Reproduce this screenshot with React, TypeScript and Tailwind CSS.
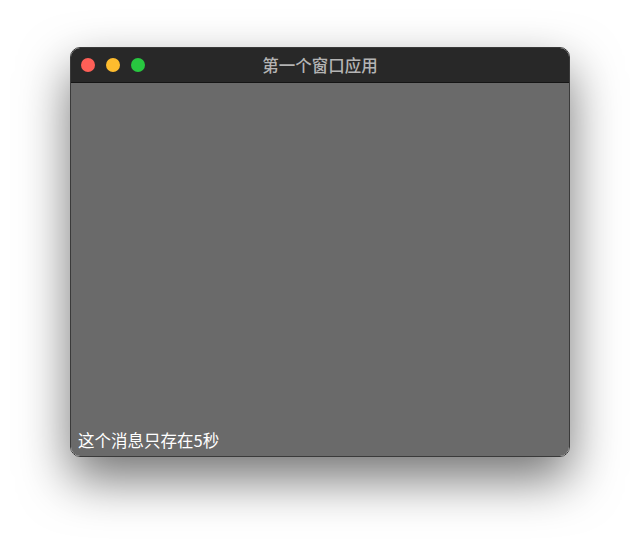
export default function App() {
  return (
    <div
      className="w-[640px] h-[550px] bg-white flex flex-col items-center pt-[47px]"
      style={{ fontFamily: '"Noto Sans CJK SC", "Liberation Sans", sans-serif' }}
    >
      {/* Window */}
      <div className="w-[500px] h-[410px] rounded-[10px] border border-[#3a3a3a] overflow-hidden flex flex-col shadow-[0_22px_50px_rgba(0,0,0,0.55)]">
        {/* Title bar */}
        <div className="relative h-[35px] bg-[#282828] border-b border-[#151515] flex items-center shrink-0">
          <div className="flex items-center gap-[11px] pl-[10px]">
            <span className="w-[14px] h-[14px] rounded-full bg-[#fe5f57]" />
            <span className="w-[14px] h-[14px] rounded-full bg-[#febc2e]" />
            <span className="w-[14px] h-[14px] rounded-full bg-[#28c840]" />
          </div>
          <div className="absolute inset-0 flex items-center justify-center text-[16.5px] font-medium text-[#b4b4b4]">
            第一个窗口应用
          </div>
        </div>
        {/* Content */}
        <div className="flex-1 bg-[#6a6a6a] flex flex-col justify-end px-[7px] pb-[5px]">
          <span className="text-[16.5px] text-white leading-[22px]">这个消息只存在5秒</span>
        </div>
      </div>
    </div>
  );
}
